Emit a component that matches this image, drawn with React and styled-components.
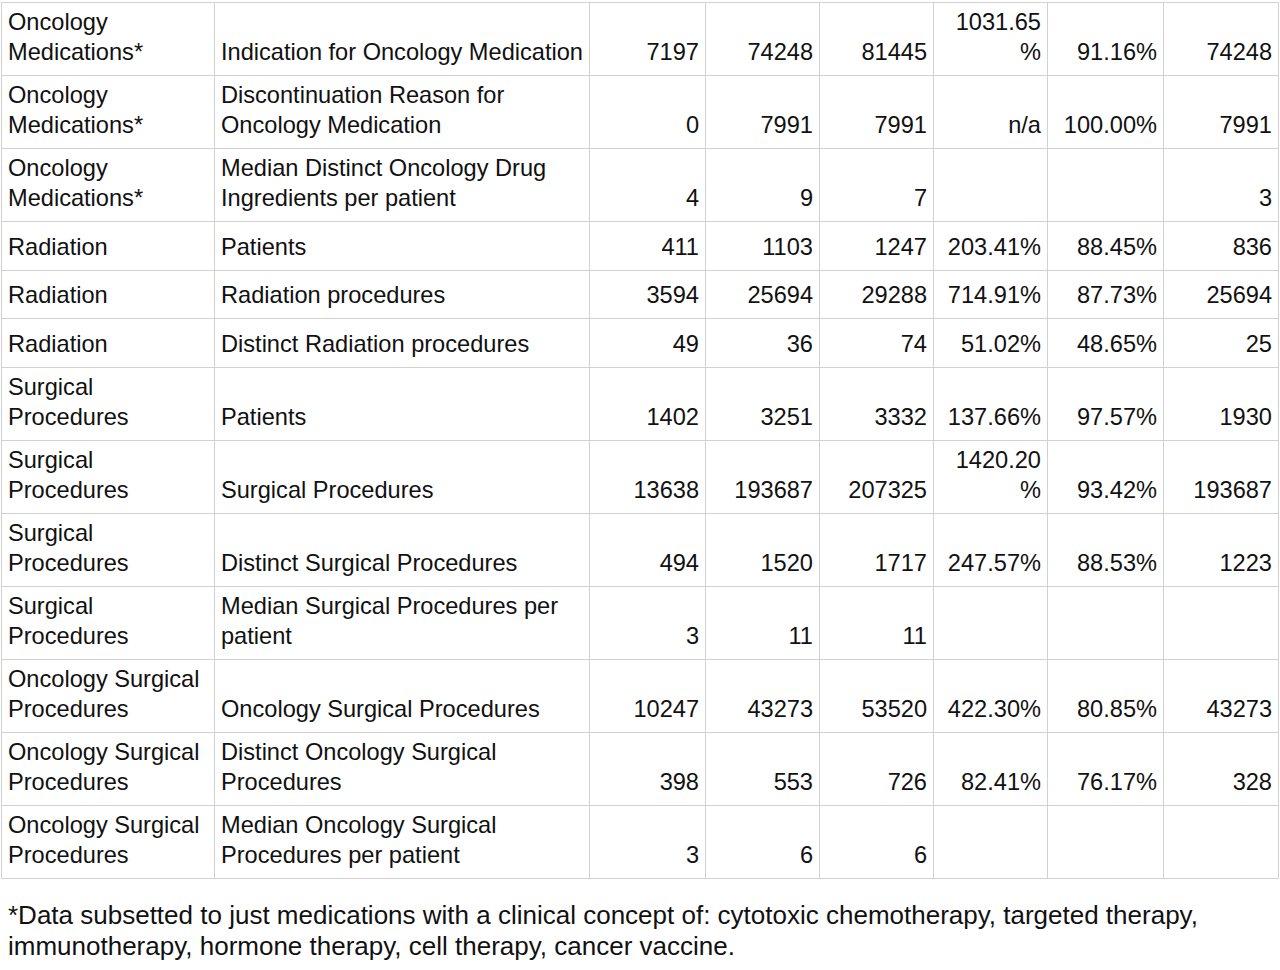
import React from "react";
import styled, { createGlobalStyle } from "styled-components";

const Global = createGlobalStyle`
  html, body { margin: 0; padding: 0; background: #ffffff; }
  body { font-family: "Liberation Sans", Arial, sans-serif; color: #111; }
`;

const Page = styled.div`
  width: 1280px;
  padding: 2px 0 0 1px;
  box-sizing: border-box;
`;

const Table = styled.table`
  border-collapse: collapse;
  table-layout: fixed;
  width: 1277px;
  font-size: 23.6px;
  line-height: 30px;
`;

const Row = styled.tr`
  height: ${(p) => (p.$tall ? "73px" : "48.5px")};
`;

const Cell = styled.td`
  border: 1.5px solid #d2d2d2;
  vertical-align: bottom;
  padding: 0 6px 8px 6px;
  text-align: ${(p) => (p.$num ? "right" : "left")};
  overflow: hidden;
  white-space: ${(p) => (p.$num ? "nowrap" : "normal")};
`;

const Note = styled.p`
  margin: 21px 0 0 7px;
  font-size: 26px;
  line-height: 31px;
  width: 1250px;
`;

const widths = [213, 375, 116, 114, 114, 114, 116, 115];

const rows = [
  ["Oncology Medications*", "Indication for Oncology Medication", "7197", "74248", "81445", ["1031.65", "%"], "91.16%", "74248", true],
  ["Oncology Medications*", "Discontinuation Reason for Oncology Medication", "0", "7991", "7991", "n/a", "100.00%", "7991", true],
  ["Oncology Medications*", "Median Distinct Oncology Drug Ingredients per patient", "4", "9", "7", "", "", "3", true],
  ["Radiation", "Patients", "411", "1103", "1247", "203.41%", "88.45%", "836", false],
  ["Radiation", "Radiation procedures", "3594", "25694", "29288", "714.91%", "87.73%", "25694", false],
  ["Radiation", "Distinct Radiation procedures", "49", "36", "74", "51.02%", "48.65%", "25", false],
  ["Surgical Procedures", "Patients", "1402", "3251", "3332", "137.66%", "97.57%", "1930", true],
  ["Surgical Procedures", "Surgical Procedures", "13638", "193687", "207325", ["1420.20", "%"], "93.42%", "193687", true],
  ["Surgical Procedures", "Distinct Surgical Procedures", "494", "1520", "1717", "247.57%", "88.53%", "1223", true],
  ["Surgical Procedures", "Median Surgical Procedures per patient", "3", "11", "11", "", "", "", true],
  ["Oncology Surgical Procedures", "Oncology Surgical Procedures", "10247", "43273", "53520", "422.30%", "80.85%", "43273", true],
  ["Oncology Surgical Procedures", "Distinct Oncology Surgical Procedures", "398", "553", "726", "82.41%", "76.17%", "328", true],
  ["Oncology Surgical Procedures", "Median Oncology Surgical Procedures per patient", "3", "6", "6", "", "", "", true],
];

const renderValue = (v) =>
  Array.isArray(v) ? (
    <>
      {v[0]}
      <br />
      {v[1]}
    </>
  ) : (
    v
  );

export default function App() {
  return (
    <Page>
      <Global />
      <Table>
        <colgroup>
          {widths.map((w, i) => (
            <col key={i} style={{ width: w }} />
          ))}
        </colgroup>
        <tbody>
          {rows.map((r, i) => {
            const [cat, metric, ...rest] = r;
            const tall = r[8];
            const nums = rest.slice(0, 6);
            return (
              <Row key={i} $tall={tall}>
                <Cell>{cat}</Cell>
                <Cell>{metric}</Cell>
                {nums.map((n, j) => (
                  <Cell key={j} $num>
                    {renderValue(n)}
                  </Cell>
                ))}
              </Row>
            );
          })}
        </tbody>
      </Table>
      <Note>
        *Data subsetted to just medications with a clinical concept of: cytotoxic chemotherapy, targeted therapy,
        immunotherapy, hormone therapy, cell therapy, cancer vaccine.
      </Note>
    </Page>
  );
}
